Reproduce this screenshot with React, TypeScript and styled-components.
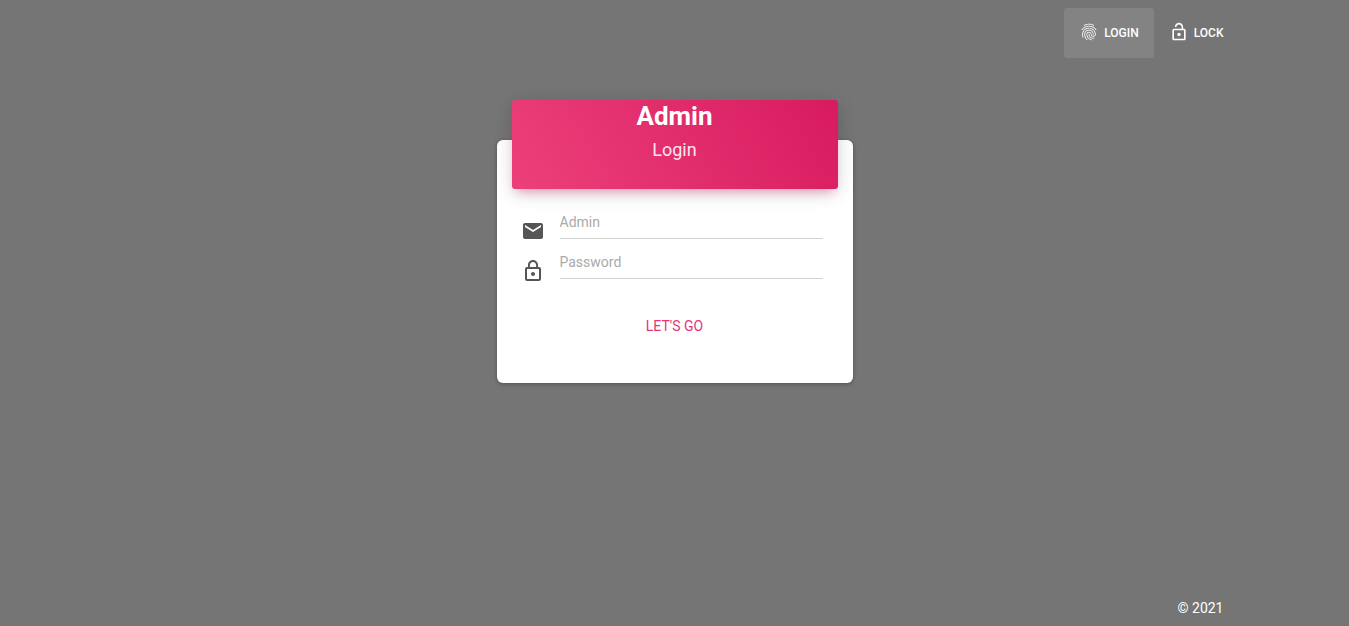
import React from "react";
import styled, { createGlobalStyle } from "styled-components";
import { MdFingerprint, MdLockOpen, MdEmail, MdLockOutline } from "react-icons/md";

const GlobalStyle = createGlobalStyle`
  *, *::before, *::after { box-sizing: border-box; }
  body {
    margin: 0;
    background: #757575;
    color: #fff;
    font-family: Roboto, "Liberation Sans", sans-serif;
    font-size: 14px;
    line-height: 20px;
  }
`;

const Page = styled.div`
  min-height: 100vh;
  display: flex;
  flex-direction: column;
`;

const Container = styled.div`
  width: 100%;
  max-width: 1140px;
  margin: 0 auto;
  padding: 0 6px;
`;

const NavBar = styled.nav`
  padding-top: 8px;
`;

const NavList = styled.ul`
  display: flex;
  justify-content: flex-end;
  list-style: none;
  margin: 0;
  padding: 0;
`;

const NavLink = styled.a<{ $active?: boolean }>`
  display: flex;
  align-items: center;
  gap: 5px;
  height: 50px;
  padding: 0 15px;
  border-radius: 3px;
  background: ${(p) => (p.$active ? "rgba(255, 255, 255, 0.1)" : "transparent")};
  color: #fff;
  font-size: 12px;
  font-weight: 500;
  text-decoration: none;
  text-transform: uppercase;

  svg {
    width: 20px;
    height: 20px;
    margin-bottom: 2px;
  }
`;

const Main = styled.main`
  flex: 1;
  display: flex;
  justify-content: center;
  align-items: flex-start;
  padding: 82px 15px 30px;
`;

const Card = styled.form`
  width: 100%;
  max-width: 356px;
  background: #fff;
  border-radius: 6px;
  box-shadow: 0 1px 4px rgba(0, 0, 0, 0.3);
`;

const CardHeader = styled.header`
  height: 89px;
  margin: -40px 15px 0;
  border-radius: 3px;
  text-align: center;
  background: linear-gradient(60deg, #ec407a, #d81b60);
  box-shadow: 0 4px 20px rgba(0, 0, 0, 0.14), 0 7px 10px -5px rgba(233, 30, 99, 0.4);
`;

const Title = styled.h1`
  margin: 0;
  font-size: 26px;
  line-height: 32px;
  font-weight: 700;
`;

const Subtitle = styled.p`
  margin: 4px 0 0;
  font-size: 18px;
  line-height: 28px;
  font-weight: 400;
  color: rgba(255, 255, 255, 0.9);
`;

const Fields = styled.div`
  display: flex;
  flex-direction: column;
  gap: 4px;
  padding: 14px 30px 0 24px;
`;

const Field = styled.label`
  display: flex;
  align-items: flex-end;
  gap: 15px;
  color: #555;

  svg {
    flex: none;
    width: 24px;
    height: 24px;
    margin-bottom: -4px;
  }
`;

const Input = styled.input`
  flex: 1;
  min-width: 0;
  height: 36px;
  padding: 2px 0 0;
  border: 0;
  border-bottom: 1px solid #d2d2d2;
  outline: 0;
  background: transparent;
  color: #555;
  font: inherit;

  &::placeholder {
    color: #aaa;
    opacity: 1;
  }
`;

const Actions = styled.div`
  display: flex;
  justify-content: center;
  padding: 24px 0 34px;
`;

const SubmitButton = styled.button`
  height: 46px;
  padding: 0 30px;
  border: 0;
  border-radius: 3px;
  background: transparent;
  color: #e6337a;
  font: inherit;
  text-transform: uppercase;
  cursor: pointer;
`;

const Footer = styled.footer`
  padding-bottom: 8px;
`;

const Copyright = styled.p`
  margin: 0;
  padding-right: 15px;
  text-align: right;
`;

export default function App() {
  return (
    <Page>
      <GlobalStyle />
      <NavBar>
        <Container>
          <NavList>
            <li>
              <NavLink href="#login" $active>
                <MdFingerprint />
                Login
              </NavLink>
            </li>
            <li>
              <NavLink href="#lock">
                <MdLockOpen />
                Lock
              </NavLink>
            </li>
          </NavList>
        </Container>
      </NavBar>
      <Main>
        <Card>
          <CardHeader>
            <Title>Admin</Title>
            <Subtitle>Login</Subtitle>
          </CardHeader>
          <Fields>
            <Field>
              <MdEmail />
              <Input type="text" placeholder="Admin" aria-label="Admin" />
            </Field>
            <Field>
              <MdLockOutline />
              <Input type="password" placeholder="Password" aria-label="Password" />
            </Field>
          </Fields>
          <Actions>
            <SubmitButton type="button">Let's go</SubmitButton>
          </Actions>
        </Card>
      </Main>
      <Footer>
        <Container>
          <Copyright>© 2021</Copyright>
        </Container>
      </Footer>
    </Page>
  );
}
